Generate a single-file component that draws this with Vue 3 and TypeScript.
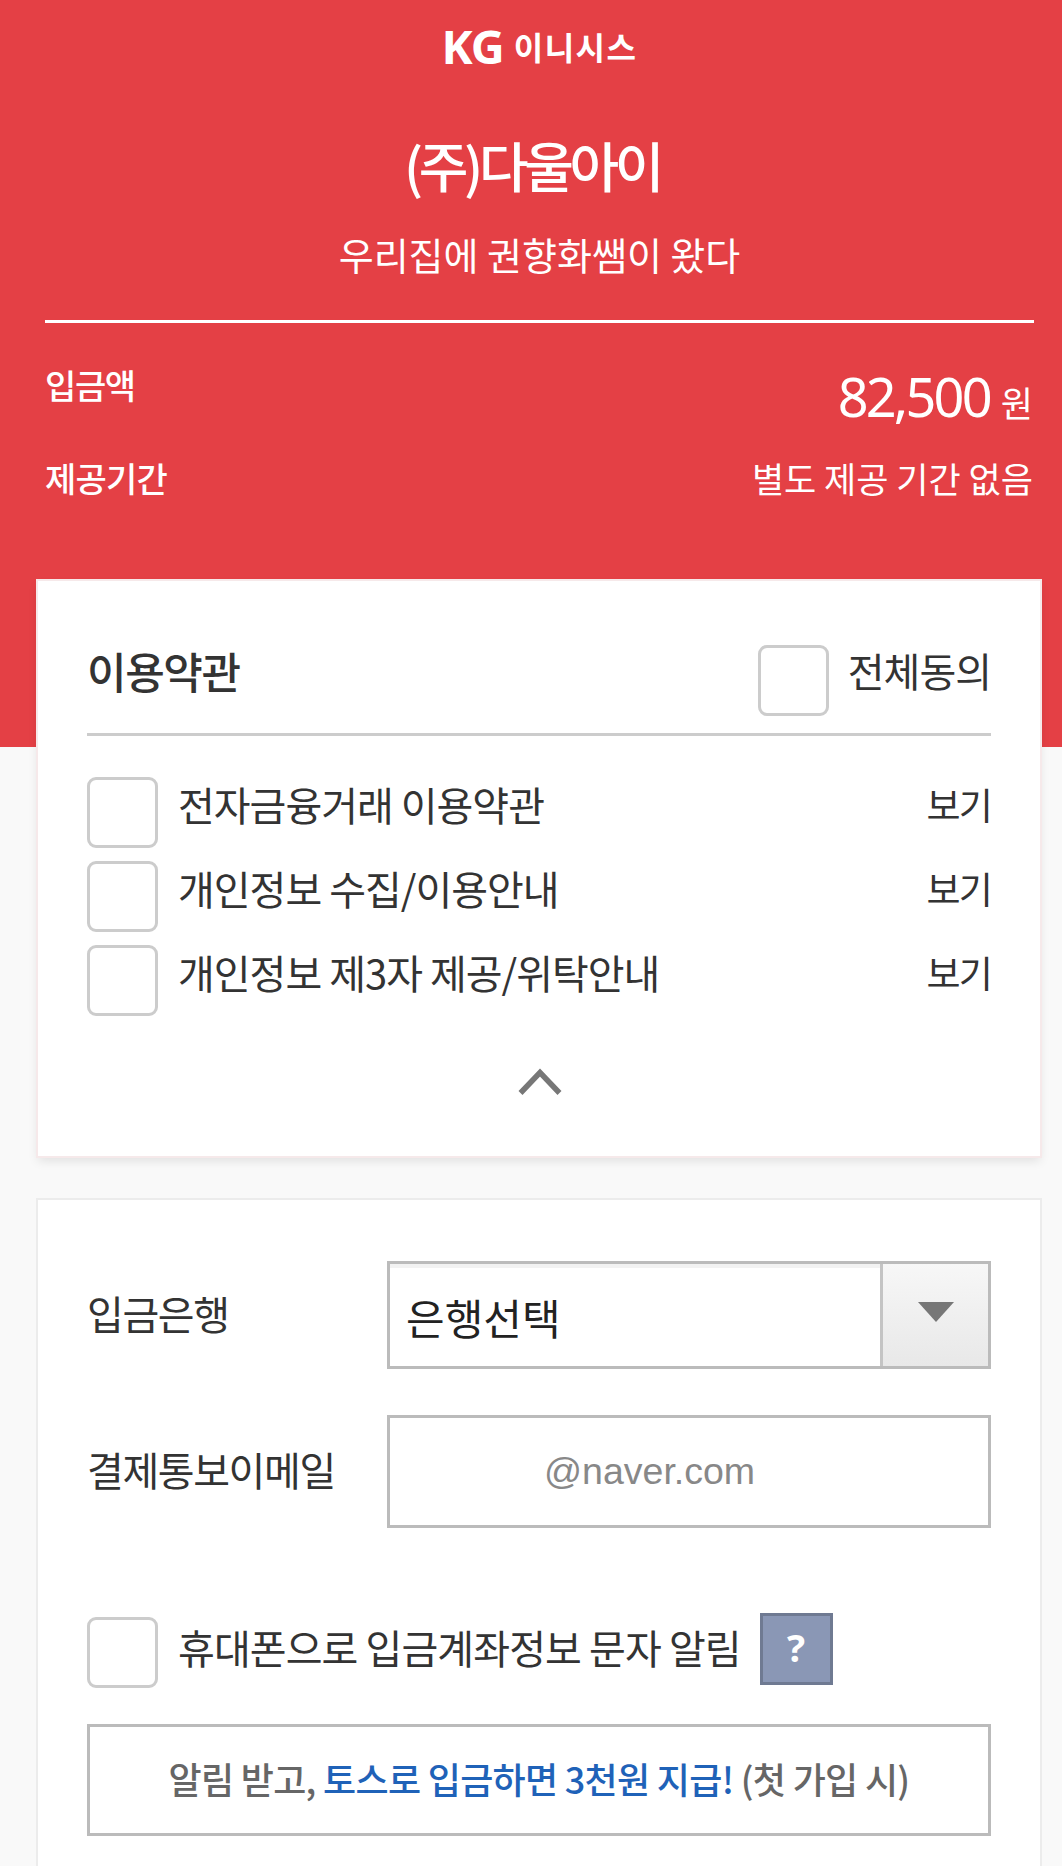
<script setup lang="ts">
interface Term { label: string }
const terms: Term[] = [
  { label: '전자금융거래 이용약관' },
  { label: '개인정보 수집/이용안내' },
  { label: '개인정보 제3자 제공/위탁안내' },
]
</script>

<template>
  <div class="page">
    <header class="head">
      <div class="logo"><span class="kg">KG</span><span class="ini">이니시스</span></div>
      <h1 class="title">(주)다울아이</h1>
      <p class="sub">우리집에 권향화쌤이 왔다</p>
      <div class="rule"></div>
      <div class="amount-row">
        <span class="head-label">입금액</span>
        <span class="amount"><b>82,500</b><i>원</i></span>
      </div>
      <div class="period-row">
        <span class="head-label">제공기간</span>
        <span class="period">별도 제공 기간 없음</span>
      </div>
    </header>

    <section class="card terms">
      <div class="terms-top">
        <h2>이용약관</h2>
        <div class="all">
          <span class="box"></span>
          <span class="all-label">전체동의</span>
        </div>
      </div>
      <ul class="term-list">
        <li v-for="t in terms" :key="t.label">
          <span class="box"></span>
          <span class="term-label">{{ t.label }}</span>
          <a class="view">보기</a>
        </li>
      </ul>
      <svg class="chev" width="46" height="28" viewBox="0 0 46 28">
        <path d="M3.5 25 L23 4.5 L42.500 25" fill="none" stroke="#777" stroke-width="5.5" stroke-linecap="butt" stroke-linejoin="miter" />
      </svg>
    </section>

    <section class="card form">
      <div class="field bank">
        <label>입금은행</label>
        <div class="select">
          <span class="select-text">은행선택</span>
          <span class="select-btn"><i class="tri"></i></span>
        </div>
      </div>
      <div class="field mail">
        <label>결제통보이메일</label>
        <div class="input">@naver.com</div>
      </div>
      <div class="sms">
        <span class="box"></span>
        <span class="sms-label">휴대폰으로 입금계좌정보 문자 알림</span>
        <span class="help">?</span>
      </div>
      <div class="note">
        알림 받고, <strong>토스로 입금하면 3천원 지급!</strong> (첫 가입 시)
      </div>
    </section>
  </div>
</template>

<style>
html, body { margin: 0; background: #f9f9f9; }
</style>

<style scoped>
* { box-sizing: border-box; }
.page {
  width: 1062px;
  height: 1866px;
  overflow: hidden;
  background: #f9f9f9;
  font-family: "Noto Sans CJK KR", "Noto Sans", sans-serif;
  color: #333;
}
.head {
  height: 747px;
  padding: 0 28px 0 45px;
  background: #e44045;
  color: #fff;
}
.logo {
  height: 92px;
  display: flex;
  justify-content: center;
  align-items: center;
  gap: 11px;
}
.kg { font-family: "Open Sans", sans-serif; font-weight: 700; font-size: 47px; letter-spacing: -2px; line-height: 1; }
.ini { font-size: 32px; font-weight: 700; letter-spacing: 1.5px; line-height: 1; }
.title {
  margin: 0;
  height: 150px;
  line-height: 146px;
  padding-right: 15px;
  text-align: center;
  font-size: 54px;
  font-weight: 500;
  letter-spacing: -4.4px;
}
.sub {
  margin: 0;
  height: 28px;
  line-height: 24px;
  text-align: center;
  font-size: 38px;
  font-weight: 400;
}
.rule { margin-top: 50px; height: 3px; background: #fff; }
.amount-row { display: flex; justify-content: space-between; height: 110px; margin-top: 20px; }
.period-row { display: flex; justify-content: space-between; height: 54px; line-height: 50px; }
.head-label { font-size: 34px; font-weight: 500; letter-spacing: -0.8px; line-height: 84px; }
.amount-row .head-label { letter-spacing: -1.4px; }
.period-row .head-label { line-height: 50px; }
.amount { line-height: 106px; display: flex; align-items: baseline; }
.amount b { font-family: "Noto Sans", sans-serif; font-weight: 400; font-size: 54px; letter-spacing: -2.8px; }
.amount i { font-style: normal; font-size: 35px; margin-left: 11px; margin-right: 1px; }
.period { font-size: 35px; margin-right: 1px; }

.card { margin: 0 22px 0 38px; background: #fff; padding: 0 49px; }
.terms {
  height: 575px;
  margin-top: -166px;
  padding-top: 64px;
  position: relative;
  box-shadow: 0 0 0 2px #f6e9ea, 0 5px 10px rgba(0, 0, 0, 0.1);
}
.box {
  flex: none;
  display: block;
  width: 71px;
  height: 71px;
  border: 3px solid #ccc;
  border-radius: 9px;
  background: #fff;
}
.terms-top {
  height: 88px;
  display: flex;
  justify-content: space-between;
  align-items: flex-start;
  border-bottom: 3px solid #ccc;
  box-sizing: content-box;
}
.terms-top h2 { margin: 0; font-size: 43px; font-weight: 500; line-height: 50px; letter-spacing: -1.4px; }
.all { display: flex; gap: 19px; }
.all-label { font-size: 40px; line-height: 50px; letter-spacing: -1px; }
.term-list { list-style: none; margin: 41px 0 0; padding: 0; }
.term-list li { display: flex; height: 84px; align-items: flex-start; }
.term-label { margin-left: 20px; font-size: 40px; line-height: 54px; letter-spacing: -1px; flex: 1; }
.view { font-size: 37px; line-height: 54px; letter-spacing: -1.8px; }
.chev { display: block; margin: 39px 0 0 calc(50% - 22px); }

.form {
  height: 668px;
  margin-top: 44px;
  padding-top: 61px;
  box-shadow: 0 0 0 2px #ececec;
}
.field { display: flex; }
.field label { width: 300px; flex: none; font-size: 40px; letter-spacing: -1.4px; color: #333; }
.bank label { line-height: 106px; transform: translateY(-1px); }
.mail { margin-top: 46px; }
.mail label { line-height: 108px; }
.select {
  flex: 1;
  height: 108px;
  border: 3px solid #bbb;
  display: flex;
  background: #fff;
  box-shadow: inset 0 4px 0 #f2f2f2;
}
.select-text { flex: 1; padding-left: 16px; font-size: 42px; line-height: 106px; color: #222; }
.select-btn {
  width: 108px;
  border-left: 3px solid #c4c4c4;
  background: linear-gradient(#f7f7f7, #e8e8e8);
  display: flex;
  align-items: center;
  justify-content: center;
}
.tri {
  width: 0;
  height: 0;
  border-left: 18px solid transparent;
  border-right: 18px solid transparent;
  border-top: 20px solid #777;
  margin-bottom: 6px;
}
.input {
  flex: 1;
  height: 113px;
  border: 3px solid #bbb;
  padding-left: 154px;
  font-family: "Liberation Sans", sans-serif;
  font-size: 37.5px;
  line-height: 107px;
  color: #888;
}
.sms { margin-top: 85px; display: flex; align-items: flex-start; position: relative; }
.sms .box { margin-top: 4px; }
.sms-label { margin-left: 20px; font-size: 40px; line-height: 68px; letter-spacing: -0.9px; }
.help {
  margin-left: 19px;
  width: 73px;
  height: 72px;
  background: #8a97b5;
  border: 3px solid #6f7a92;
  color: #fff;
  font-family: "Liberation Sans Narrow", "Open Sans", sans-serif;
  font-weight: 700;
  font-size: 38px;
  line-height: 62px;
  text-align: center;
}
.note {
  margin-top: 36px;
  height: 112px;
  border: 3px solid #bbb;
  text-align: center;
  font-size: 36px;
  font-weight: 500;
  line-height: 102px;
  letter-spacing: -0.7px;
  color: #666;
}
.note strong { font-weight: 500; color: #1f62b8; }
</style>
